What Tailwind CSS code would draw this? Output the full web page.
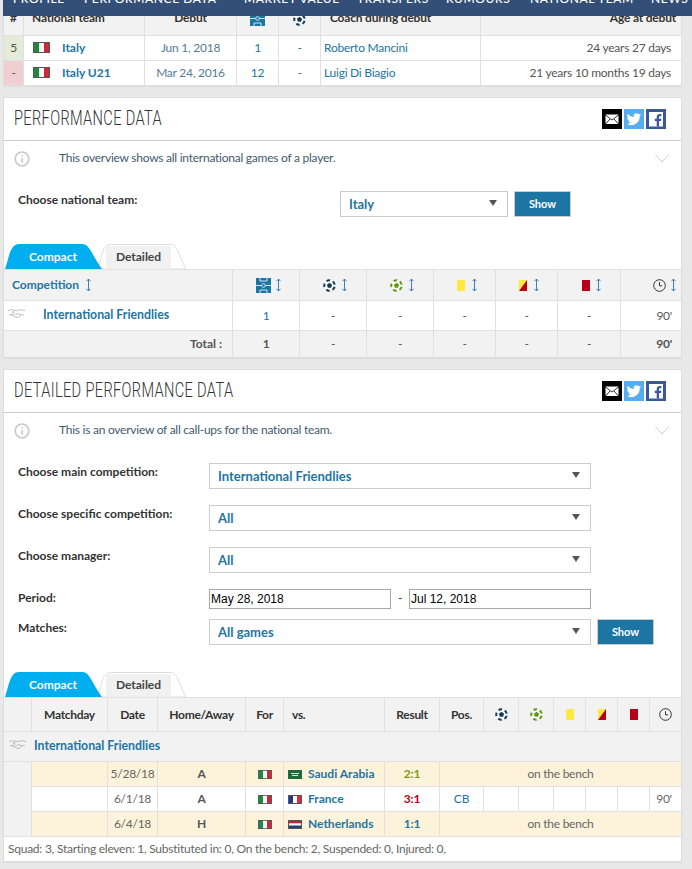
<!DOCTYPE html>
<html lang="en">
<head>
<meta charset="utf-8">
<title>Performance data</title>
<script src="https://cdn.jsdelivr.net/npm/@tailwindcss/browser@4"></script>
</head>
<body class="bg-[#e8e8e8] font-['Lato','Noto_Sans',sans-serif] text-[12px] tracking-[-0.25px] text-[#444] overflow-hidden h-[869px]">
<svg class="hidden">
  <symbol id="sort" viewBox="0 0 7 14"><path d="M3.500 1v12M1.500 3.200 3.500 1l2 2.200M1.500 10.800l2 2.200 2-2.200" fill="none" stroke="#3f7fae" stroke-width="1"/></symbol>
  <symbol id="field" viewBox="0 0 15 15"><rect width="15" height="15" fill="#1d75a3"/><path d="M0 7.500h15M4 0v3h7V0M4 15v-3h7v3" fill="none" stroke="#fff" stroke-width=".8"/><circle cx="7.500" cy="7.500" r="1.800" fill="#1d75a3" stroke="#cfe3ef"/></symbol>
  <symbol id="ball" viewBox="0 0 13 13"><circle cx="6.500" cy="6.500" r="6.200" fill="#fff" stroke="#d8d8d8" stroke-width=".5"/><circle cx="6.500" cy="6.500" r="5.200" fill="none" stroke="#123a5c" stroke-width="2" stroke-dasharray="3.600 2.930" stroke-dashoffset="5.300"/><path d="M6.500 3.800 9.100 5.700 8.100 8.700H4.900L3.900 5.700Z" fill="#123a5c"/></symbol>
  <symbol id="ballg" viewBox="0 0 13 13"><circle cx="6.500" cy="6.500" r="6.200" fill="#fff" stroke="#d8d8d8" stroke-width=".5"/><circle cx="6.500" cy="6.500" r="5.200" fill="none" stroke="#5f9a10" stroke-width="2" stroke-dasharray="3.600 2.930" stroke-dashoffset="5.300"/><path d="M6.500 3.800 9.100 5.700 8.100 8.700H4.900L3.900 5.700Z" fill="#5f9a10"/></symbol>
  <symbol id="yr" viewBox="0 0 8 11"><rect width="8" height="11" fill="#ffe83f"/><path d="M8 0v11H0Z" fill="#b80017"/></symbol>
  <symbol id="clock" viewBox="0 0 13 13"><circle cx="6.500" cy="6.500" r="5.800" fill="none" stroke="#333" stroke-width="1"/><path d="M6.500 3.200v3.600h2.600" fill="none" stroke="#333" stroke-width="1"/></symbol>
  <symbol id="shake" viewBox="0 0 18 9"><path d="M0 1.500 4 .5l5 1 5-1 4 1M1 6l4-.5 3 3 3 0 3-3 3 .5M5 2.500l3 3 3-1 3 2M7 1.500 4 4M3 5l3 2.500" fill="none" stroke="#aaa" stroke-width=".8"/></symbol>
  <symbol id="it" viewBox="0 0 17 11"><rect width="17" height="11" fill="#555"/><rect x="1" y="1" width="5" height="9" fill="#1c8a3c"/><rect x="6" y="1" width="5" height="9" fill="#fff"/><rect x="11" y="1" width="5" height="9" fill="#cf2734"/></symbol>
  <symbol id="info" viewBox="0 0 16 16"><circle cx="8" cy="8" r="6.800" fill="none" stroke="#ccc" stroke-width="1.800"/><path d="M8 7v5M8 4v1.600" stroke="#ccc" stroke-width="1.600"/></symbol>
  <symbol id="chev" viewBox="0 0 14 9"><path d="M.5.5 7 8 13.500.5" fill="none" stroke="#ccc"/></symbol>
  <symbol id="mail" viewBox="0 0 20 20"><rect width="20" height="20" fill="#000"/><rect x="3.500" y="5.500" width="13" height="9.500" rx="1" fill="#fff"/><path d="m3.500 6 6.500 5 6.500-5M3.500 15 8 10M16.500 15 12 10" fill="none" stroke="#000" stroke-width=".8"/></symbol>
  <symbol id="tw" viewBox="0 0 20 20"><rect width="20" height="20" fill="#55acee"/><path d="M17 5.500c-.5.300-1.200.500-1.700.600.600-.400 1.100-1 1.300-1.700-.600.400-1.200.600-1.900.8a3 3 0 0 0-5.100 2.700C7.200 7.800 5 6.600 3.600 4.800c-.8 1.400-.4 3.100.9 4-.5 0-1-.2-1.400-.4 0 1.500 1 2.700 2.400 3-.4.100-.9.100-1.300 0 .4 1.200 1.500 2 2.800 2.100A6 6 0 0 1 2.600 14.700 8.500 8.500 0 0 0 15.700 7.200c.500-.4.900-1 1.300-1.700Z" fill="#fff"/></symbol>
  <symbol id="fb" viewBox="0 0 20 20"><rect width="20" height="20" fill="#3b5998"/><rect x="3" y="3" width="14" height="14.500" fill="#fff"/><path d="M13 17.500v-5.500h2l.3-2.300H13V8.300c0-.7.200-1.100 1.100-1.100h1.200V5.100c-.2 0-.9-.1-1.700-.1-1.700 0-2.900 1-2.900 3v1.700h-2V12h2v5.500Z" fill="#3b5998"/></symbol>
</svg>

<nav class="relative z-10 ml-[3px] h-[16px] bg-[#334f77] overflow-hidden flex items-end text-white text-[12px] font-medium tracking-[.6px] whitespace-nowrap">
  <div class="flex pl-[10px] pb-[8px] leading-[18px]">
    <span class="w-[71px]">PROFILE</span><span class="w-[160px]">PERFORMANCE DATA</span><span class="w-[113px]">MARKET VALUE</span><span class="w-[89px]">TRANSFERS</span><span class="w-[84px]">RUMOURS</span><span class="w-[121px]">NATIONAL TEAM</span><span>NEWS</span>
  </div>
</nav>

<!-- national team table -->
<section class="ml-[3px] w-[679px] -mt-[6px] border-l border-[#ddd] shadow-[0_1px_0_#dcdcdc]">
  <table class="w-[678px] table-fixed border-separate border-spacing-0 text-center">
    <colgroup><col class="w-[20px]"><col class="w-[121px]"><col class="w-[92px]"><col class="w-[42px]"><col class="w-[42px]"><col class="w-[160px]"><col class="w-[201px]"></colgroup>
    <thead class="bg-[#f2f2f2] font-bold tracking-[-0.2px] leading-[16px] text-[#333]">
      <tr>
        <th class="h-[26px] pb-[9px] border-r border-b border-[#e0e0e0]">#</th>
        <th class="pb-[9px] pl-[8px] text-left border-r border-b border-[#e0e0e0]">National team</th>
        <th class="pb-[9px] border-r border-b border-[#e0e0e0]">Debut</th>
        <th class="border-r border-b border-[#e0e0e0] align-bottom pb-[9px]"><svg class="mx-auto w-[15px] h-[15px]"><use href="#field"/></svg></th>
        <th class="border-r border-b border-[#e0e0e0] align-bottom pb-[9px]"><svg class="mx-auto w-[13px] h-[13px]"><use href="#ball"/></svg></th>
        <th class="pb-[9px] pl-[9px] text-left border-r border-b border-[#e0e0e0]">Coach during debut</th>
        <th class="pb-[9px] pr-[5px] text-right border-r border-b border-[#e0e0e0]">Age at debut</th>
      </tr>
    </thead>
    <tbody class="bg-white">
      <tr>
        <td class="h-[25px] bg-[#e4ecd7] border-r border-b border-[#e0e0e0] text-[#555]">5</td>
        <td class="text-left pl-[9px] border-r border-b border-[#e0e0e0]"><a class="flex items-center gap-[12px] font-bold tracking-normal text-[#1d75a3]"><svg class="w-[17px] h-[11px] -mt-[1px]"><use href="#it"/></svg>Italy</a></td>
        <td class="border-r border-b border-[#e0e0e0] text-[#557a9a]">Jun 1, 2018</td>
        <td class="border-r border-b border-[#e0e0e0] text-[#1d75a3]">1</td>
        <td class="border-r border-b border-[#e0e0e0] text-[#1d75a3]">-</td>
        <td class="text-left pl-[3px] border-r border-b border-[#e0e0e0] text-[#1d75a3]">Roberto Mancini</td>
        <td class="text-right pr-[10px] border-r border-b border-[#e0e0e0] text-[#555]">24 years 27 days</td>
      </tr>
      <tr>
        <td class="h-[25px] bg-[#f1ced2] border-r border-b border-[#e0e0e0] text-[#555]">-</td>
        <td class="text-left pl-[9px] border-r border-b border-[#e0e0e0]"><a class="flex items-center gap-[12px] font-bold tracking-normal text-[#1d75a3]"><svg class="w-[17px] h-[11px] -mt-[1px]"><use href="#it"/></svg>Italy U21</a></td>
        <td class="border-r border-b border-[#e0e0e0] text-[#557a9a]">Mar 24, 2016</td>
        <td class="border-r border-b border-[#e0e0e0] text-[#1d75a3]">12</td>
        <td class="border-r border-b border-[#e0e0e0] text-[#1d75a3]">-</td>
        <td class="text-left pl-[3px] border-r border-b border-[#e0e0e0] text-[#1d75a3]">Luigi Di Biagio</td>
        <td class="text-right pr-[10px] border-r border-b border-[#e0e0e0] text-[#555]">21 years 10 months 19 days</td>
      </tr>
    </tbody>
  </table>
</section>

<!-- performance data -->
<section class="ml-[3px] mt-[11px] w-[679px] bg-white border border-[#ddd] border-b-2">
  <header class="h-[43px] border-b border-[#ccc] flex items-center justify-between pl-[10px] pr-[15px]">
    <h2 class="font-['Roboto',sans-serif] font-light text-[21px] text-[#333] whitespace-nowrap origin-left scale-x-[.695] tracking-[.5px]">PERFORMANCE DATA</h2>
    <div class="flex gap-[2px]"><svg class="w-[20px] h-[20px]"><use href="#mail"/></svg><svg class="w-[20px] h-[20px]"><use href="#tw"/></svg><svg class="w-[20px] h-[20px]"><use href="#fb"/></svg></div>
  </header>
  <div class="h-[50px] flex items-start pt-[8px] pl-[10px] pr-[12px]">
    <svg class="w-[16px] h-[16px] mt-[2px]"><use href="#info"/></svg>
    <p class="ml-[29px] flex-1 text-[#3f5a70]">This overview shows all international games of a player.</p>
    <svg class="w-[14px] h-[9px] mt-[5px]"><use href="#chev"/></svg>
  </div>
  <div class="flex h-[26px] pl-[14px]">
    <label class="w-[322px] font-bold tracking-normal text-[#333]">Choose national team:</label>
    <div class="w-[168px] border border-[#ccc] flex items-center justify-between pl-[8px] pt-[2px] pr-[10px] text-[13px] tracking-normal font-bold text-[#1d75a3]">Italy<i class="w-0 h-0 border-x-[4px] border-t-[6px] border-x-transparent border-t-[#555] -mt-[4px]"></i></div>
    <button class="ml-[6px] w-[57px] border border-[#ccc] bg-[#1d75a3] text-white font-bold text-[11px] tracking-normal">Show</button>
  </div>
  <div class="mt-[27px] h-[25px] flex font-bold tracking-normal">
    <div class="relative z-[1] w-[98px] flex items-center justify-center text-white">
      <svg class="absolute inset-0 -z-10" width="98" height="25" viewBox="0 0 98 25"><path d="M1 25C5 14 6 0 15 0H78c8 0 9 10 20 25Z" fill="#00aeef"/></svg>
      <span class="relative">Compact</span>
    </div>
    <div class="relative w-[88px] -ml-[4px] flex items-center justify-center pr-[7px] text-[#444]">
      <svg class="absolute inset-0" width="88" height="25" viewBox="0 0 88 25"><path d="M0 25C4 12 4 .5 13 .5H72c8 0 8 10 16 24.500Z" fill="#fff" stroke="#ddd"/><rect x="8" y="2" width="65" height="23" fill="#f1f1f1"/></svg>
      <span class="relative">Detailed</span>
    </div>
  </div>
  <table class="w-[677px] table-fixed border-separate border-spacing-0 border-t border-[#e0e0e0] text-center">
    <colgroup><col class="w-[229px]"><col class="w-[67px]"><col class="w-[67px]"><col class="w-[67px]"><col class="w-[62px]"><col class="w-[62px]"><col class="w-[63px]"><col class="w-[60px]"></colgroup>
    <thead class="bg-[#f2f2f2]">
      <tr>
        <th class="h-[31px] pl-[8px] border-r border-b border-[#e0e0e0]"><div class="flex items-center gap-[6px] font-bold tracking-normal text-[#1d75a3]">Competition <svg class="w-[7px] h-[14px]"><use href="#sort"/></svg></div></th>
        <th class="pl-[23px] border-r border-b border-[#e0e0e0]"><div class="flex items-center gap-[4px]"><svg class="w-[15px] h-[15px]"><use href="#field"/></svg><svg class="w-[7px] h-[14px]"><use href="#sort"/></svg></div></th>
        <th class="pl-[23px] border-r border-b border-[#e0e0e0]"><div class="flex items-center gap-[5px]"><svg class="w-[13px] h-[13px]"><use href="#ball"/></svg><svg class="w-[7px] h-[14px]"><use href="#sort"/></svg></div></th>
        <th class="pl-[23px] border-r border-b border-[#e0e0e0]"><div class="flex items-center gap-[5px]"><svg class="w-[13px] h-[13px]"><use href="#ballg"/></svg><svg class="w-[7px] h-[14px]"><use href="#sort"/></svg></div></th>
        <th class="pl-[23px] border-r border-b border-[#e0e0e0]"><div class="flex items-center gap-[6px]"><i class="w-[8px] h-[11px] bg-[#ffe83f]"></i><svg class="w-[7px] h-[14px]"><use href="#sort"/></svg></div></th>
        <th class="pl-[23px] border-r border-b border-[#e0e0e0]"><div class="flex items-center gap-[6px]"><svg class="w-[8px] h-[11px]"><use href="#yr"/></svg><svg class="w-[7px] h-[14px]"><use href="#sort"/></svg></div></th>
        <th class="pl-[24px] border-r border-b border-[#e0e0e0]"><div class="flex items-center gap-[5px]"><i class="w-[8px] h-[11px] bg-[#b80017]"></i><svg class="w-[7px] h-[14px]"><use href="#sort"/></svg></div></th>
        <th class="pl-[32px] border-b border-[#e0e0e0]"><div class="flex items-center gap-[4px]"><svg class="w-[13px] h-[13px]"><use href="#clock"/></svg><svg class="w-[7px] h-[14px]"><use href="#sort"/></svg></div></th>
      </tr>
    </thead>
    <tbody>
      <tr class="bg-white text-[#555]">
        <td class="h-[30px] pl-[4px] border-r border-b border-[#e0e0e0]"><div class="flex items-center gap-[18px] text-[12.300px] tracking-normal font-bold text-[#1d75a3]"><svg class="w-[17px] h-[9px] -mt-[4px]"><use href="#shake"/></svg>International Friendlies</div></td>
        <td class="border-r border-b border-[#e0e0e0] text-[#1d75a3]">1</td>
        <td class="border-r border-b border-[#e0e0e0]">-</td>
        <td class="border-r border-b border-[#e0e0e0]">-</td>
        <td class="border-r border-b border-[#e0e0e0]">-</td>
        <td class="border-r border-b border-[#e0e0e0]">-</td>
        <td class="border-r border-b border-[#e0e0e0]">-</td>
        <td class="text-right pr-[9px] border-b border-[#e0e0e0]">90'</td>
      </tr>
      <tr class="bg-[#f2f2f2] text-[#555]">
        <td class="h-[26px] pr-[10px] text-right font-bold tracking-normal border-r border-[#e0e0e0]">Total :</td>
        <td class="font-bold border-r border-[#e0e0e0]">1</td>
        <td class="border-r border-[#e0e0e0]">-</td>
        <td class="border-r border-[#e0e0e0]">-</td>
        <td class="border-r border-[#e0e0e0]">-</td>
        <td class="border-r border-[#e0e0e0]">-</td>
        <td class="border-r border-[#e0e0e0]">-</td>
        <td class="text-right pr-[9px] font-bold">90'</td>
      </tr>
    </tbody>
  </table>
</section>

<!-- detailed performance data -->
<section class="ml-[3px] mt-[10px] w-[679px] bg-white border border-[#ddd] border-b-2">
  <header class="h-[43px] border-b border-[#ccc] flex items-center justify-between pl-[10px] pr-[15px]">
    <h2 class="font-['Roboto',sans-serif] font-light text-[21px] text-[#333] whitespace-nowrap origin-left scale-x-[.695] tracking-[.5px]">DETAILED PERFORMANCE DATA</h2>
    <div class="flex gap-[2px]"><svg class="w-[20px] h-[20px]"><use href="#mail"/></svg><svg class="w-[20px] h-[20px]"><use href="#tw"/></svg><svg class="w-[20px] h-[20px]"><use href="#fb"/></svg></div>
  </header>
  <div class="h-[50px] flex items-start pt-[8px] pl-[10px] pr-[12px]">
    <svg class="w-[16px] h-[16px] mt-[2px]"><use href="#info"/></svg>
    <p class="ml-[29px] flex-1 text-[#3f5a70]">This is an overview of all call-ups for the national team.</p>
    <svg class="w-[14px] h-[9px] mt-[5px]"><use href="#chev"/></svg>
  </div>
  <div class="pl-[14px] flex flex-col">
    <div class="flex h-[26px] mb-[16px]">
      <label class="w-[191px] font-bold tracking-normal text-[#333]">Choose main competition:</label>
      <div class="w-[382px] border border-[#ccc] flex items-center justify-between pl-[8px] pt-[2px] pr-[10px] text-[13px] tracking-normal font-bold text-[#1d75a3]">International Friendlies<i class="w-0 h-0 border-x-[4px] border-t-[6px] border-x-transparent border-t-[#555] -mt-[4px]"></i></div>
    </div>
    <div class="flex h-[26px] mb-[16px]">
      <label class="w-[191px] font-bold tracking-normal text-[#333]">Choose specific competition:</label>
      <div class="w-[382px] border border-[#ccc] flex items-center justify-between pl-[8px] pt-[2px] pr-[10px] text-[13px] tracking-normal font-bold text-[#1d75a3]">All<i class="w-0 h-0 border-x-[4px] border-t-[6px] border-x-transparent border-t-[#555] -mt-[4px]"></i></div>
    </div>
    <div class="flex h-[26px] mb-[16px]">
      <label class="w-[191px] font-bold tracking-normal text-[#333]">Choose manager:</label>
      <div class="w-[382px] border border-[#ccc] flex items-center justify-between pl-[8px] pt-[2px] pr-[10px] text-[13px] tracking-normal font-bold text-[#1d75a3]">All<i class="w-0 h-0 border-x-[4px] border-t-[6px] border-x-transparent border-t-[#555] -mt-[4px]"></i></div>
    </div>
    <div class="flex h-[20px] mb-[10px]">
      <label class="w-[191px] font-bold tracking-normal text-[#333]">Period:</label>
      <input class="w-[182px] h-[20px] border border-[#a9a9a9] px-[1px] font-['Liberation_Sans',sans-serif] text-[12px] tracking-normal text-black" value="May 28, 2018">
      <span class="w-[18px] text-center font-['Liberation_Sans',sans-serif] text-[#444]">-</span>
      <input class="w-[182px] h-[20px] border border-[#a9a9a9] px-[1px] font-['Liberation_Sans',sans-serif] text-[12px] tracking-normal text-black" value="Jul 12, 2018">
    </div>
    <div class="flex h-[26px]">
      <label class="w-[191px] font-bold tracking-normal text-[#333]">Matches:</label>
      <div class="w-[382px] border border-[#ccc] flex items-center justify-between pl-[8px] pt-[2px] pr-[10px] text-[13px] tracking-normal font-bold text-[#1d75a3]">All games<i class="w-0 h-0 border-x-[4px] border-t-[6px] border-x-transparent border-t-[#555] -mt-[4px]"></i></div>
      <button class="ml-[6px] w-[57px] border border-[#ccc] bg-[#1d75a3] text-white font-bold text-[11px] tracking-normal">Show</button>
    </div>
  </div>
  <div class="mt-[27px] h-[25px] flex font-bold tracking-normal">
    <div class="relative z-[1] w-[98px] flex items-center justify-center text-white">
      <svg class="absolute inset-0 -z-10" width="98" height="25" viewBox="0 0 98 25"><path d="M1 25C5 14 6 0 15 0H78c8 0 9 10 20 25Z" fill="#00aeef"/></svg>
      <span class="relative">Compact</span>
    </div>
    <div class="relative w-[88px] -ml-[4px] flex items-center justify-center pr-[7px] text-[#444]">
      <svg class="absolute inset-0" width="88" height="25" viewBox="0 0 88 25"><path d="M0 25C4 12 4 .5 13 .5H72c8 0 8 10 16 24.500Z" fill="#fff" stroke="#ddd"/><rect x="8" y="2" width="65" height="23" fill="#f1f1f1"/></svg>
      <span class="relative">Detailed</span>
    </div>
  </div>
  <table class="w-[677px] table-fixed border-separate border-spacing-0 border-t border-[#e0e0e0] text-center">
    <colgroup><col class="w-[28px]"><col class="w-[76px]"><col class="w-[50px]"><col class="w-[88px]"><col class="w-[38px]"><col class="w-[101px]"><col class="w-[55px]"><col class="w-[44px]"><col class="w-[35px]"><col class="w-[35px]"><col class="w-[32px]"><col class="w-[32px]"><col class="w-[32px]"><col class="w-[31px]"></colgroup>
    <thead class="bg-[#f2f2f2] font-bold tracking-[-0.3px] text-[#333]">
      <tr>
        <th class="h-[34px] border-r border-b border-[#e0e0e0]"></th>
        <th class="border-r border-b border-[#e0e0e0]">Matchday</th>
        <th class="border-r border-b border-[#e0e0e0]">Date</th>
        <th class="border-r border-b border-[#e0e0e0]">Home/Away</th>
        <th class="border-r border-b border-[#e0e0e0]">For</th>
        <th class="text-left pl-[8px] border-r border-b border-[#e0e0e0]">vs.</th>
        <th class="border-r border-b border-[#e0e0e0]">Result</th>
        <th class="border-r border-b border-[#e0e0e0]">Pos.</th>
        <th class="border-r border-b border-[#e0e0e0]"><svg class="mx-auto w-[13px] h-[13px]"><use href="#ball"/></svg></th>
        <th class="border-r border-b border-[#e0e0e0]"><svg class="mx-auto w-[13px] h-[13px]"><use href="#ballg"/></svg></th>
        <th class="border-r border-b border-[#e0e0e0]"><i class="block mx-auto w-[8px] h-[11px] bg-[#ffe83f]"></i></th>
        <th class="border-r border-b border-[#e0e0e0]"><svg class="mx-auto w-[8px] h-[11px]"><use href="#yr"/></svg></th>
        <th class="border-r border-b border-[#e0e0e0]"><i class="block mx-auto w-[8px] h-[11px] bg-[#b80017]"></i></th>
        <th class="border-b border-[#e0e0e0]"><svg class="mx-auto w-[13px] h-[13px]"><use href="#clock"/></svg></th>
      </tr>
    </thead>
    <tbody class="text-[#666]">
      <tr class="bg-[#f2f2f2]">
        <td colspan="14" class="h-[30px] pl-[5px] text-left border-b border-[#e0e0e0]"><div class="flex items-center gap-[8px] text-[12.300px] tracking-normal font-bold text-[#1d75a3]"><svg class="w-[17px] h-[9px] -mt-[4px]"><use href="#shake"/></svg>International Friendlies</div></td>
      </tr>
      <tr class="bg-[#fdf3da]">
        <td rowspan="3" class="bg-[#f2f2f2] border-r border-b border-[#e0e0e0]"></td>
        <td class="h-[25px] border-r border-b border-[#e0e0e0]"></td>
        <td class="border-r border-b border-[#e0e0e0]">5/28/18</td>
        <td class="font-bold text-[#555] border-r border-b border-[#e0e0e0]">A</td>
        <td class="border-r border-b border-[#e0e0e0]"><svg class="mx-auto w-[14px] h-[9px]"><use href="#it"/></svg></td>
        <td class="text-left pl-[4px] border-r border-b border-[#e0e0e0]"><div class="flex items-center gap-[6px] tracking-normal font-bold text-[#1d75a3] whitespace-nowrap"><svg class="w-[14px] h-[9px]" viewBox="0 0 14 9"><rect width="14" height="9" fill="#1c6b3a"/><path d="M3 3.500h8M4 5.500h6" stroke="#d8e8dc"/></svg>Saudi Arabia</div></td>
        <td class="font-bold text-[#7f9a10] border-r border-b border-[#e0e0e0]">2:1</td>
        <td colspan="7" class="border-b border-[#e0e0e0]">on the bench</td>
      </tr>
      <tr class="bg-white">
        <td class="h-[25px] border-r border-b border-[#e0e0e0]"></td>
        <td class="border-r border-b border-[#e0e0e0]">6/1/18</td>
        <td class="font-bold text-[#555] border-r border-b border-[#e0e0e0]">A</td>
        <td class="border-r border-b border-[#e0e0e0]"><svg class="mx-auto w-[14px] h-[9px]"><use href="#it"/></svg></td>
        <td class="text-left pl-[4px] border-r border-b border-[#e0e0e0]"><div class="flex items-center gap-[6px] tracking-normal font-bold text-[#1d75a3]"><svg class="w-[14px] h-[9px]" viewBox="0 0 14 9"><rect width="14" height="9" fill="#555"/><rect x="1" y="1" width="4" height="7" fill="#1f3a8f"/><rect x="5" y="1" width="4" height="7" fill="#fff"/><rect x="9" y="1" width="4" height="7" fill="#d8283a"/></svg>France</div></td>
        <td class="font-bold text-[#b80017] border-r border-b border-[#e0e0e0]">3:1</td>
        <td class="text-[#1d75a3] border-r border-b border-[#e0e0e0]">CB</td>
        <td class="border-r border-b border-[#e0e0e0]"></td>
        <td class="border-r border-b border-[#e0e0e0]"></td>
        <td class="border-r border-b border-[#e0e0e0]"></td>
        <td class="border-r border-b border-[#e0e0e0]"></td>
        <td class="border-r border-b border-[#e0e0e0]"></td>
        <td class="pr-[3px] border-b border-[#e0e0e0]">90'</td>
      </tr>
      <tr class="bg-[#fdf3da]">
        <td class="h-[25px] border-r border-b border-[#e0e0e0]"></td>
        <td class="border-r border-b border-[#e0e0e0]">6/4/18</td>
        <td class="font-bold text-[#555] border-r border-b border-[#e0e0e0]">H</td>
        <td class="border-r border-b border-[#e0e0e0]"><svg class="mx-auto w-[14px] h-[9px]"><use href="#it"/></svg></td>
        <td class="text-left pl-[4px] border-r border-b border-[#e0e0e0]"><div class="flex items-center gap-[6px] tracking-normal font-bold text-[#1d75a3]"><svg class="w-[14px] h-[9px]" viewBox="0 0 14 9"><rect width="14" height="9" fill="#555"/><rect x="1" y="1" width="12" height="2.300" fill="#b5283a"/><rect x="1" y="3.300" width="12" height="2.400" fill="#fff"/><rect x="1" y="5.700" width="12" height="2.300" fill="#24407f"/></svg>Netherlands</div></td>
        <td class="font-bold text-[#1d75a3] border-r border-b border-[#e0e0e0]">1:1</td>
        <td colspan="7" class="border-b border-[#e0e0e0]">on the bench</td>
      </tr>
    </tbody>
  </table>
  <p class="h-[24px] pl-[4px] flex items-center text-[#666]">Squad: 3, Starting eleven: 1, Substituted in: 0, On the bench: 2, Suspended: 0, Injured: 0,</p>
</section>
</body>
</html>
